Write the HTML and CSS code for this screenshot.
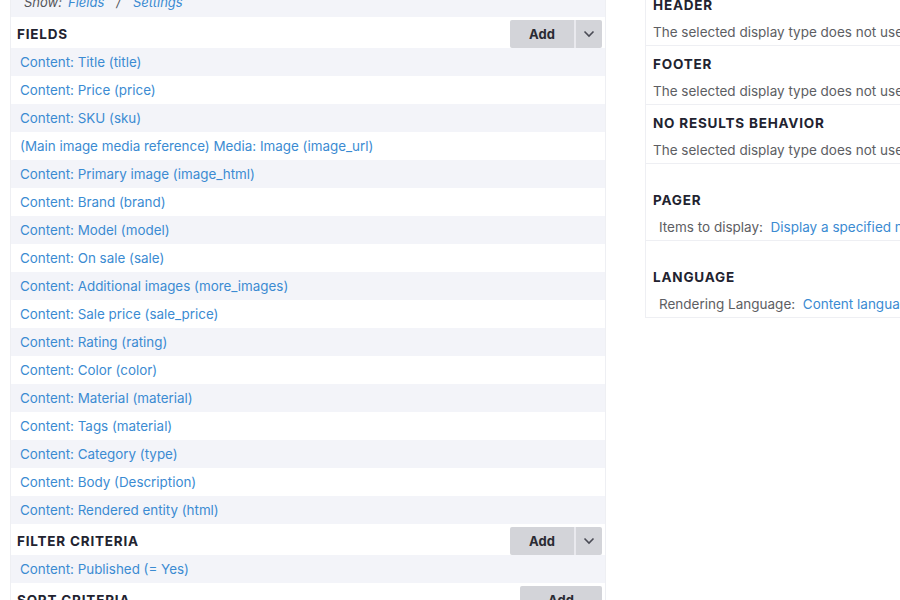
FILE: index.html
```html
<!DOCTYPE html>
<html>
<head>
<meta charset="utf-8">
<link rel="stylesheet" href="styles.css">
</head>
<body>
<div class="page">
  <div class="main">
    <div class="show-bar"><span class="show-label">Show:</span> <a href="#">Fields</a> <span class="sep">/</span> <a href="#">Settings</a></div>

    <section class="bucket">
      <div class="bucket-head">
        <h3>FIELDS</h3>
        <div class="btn-group"><button class="btn">Add</button><button class="btn caret"><svg width="12" height="8" viewBox="0 0 12 8"><path d="M1.5 1.5 L6 6 L10.5 1.5" fill="none" stroke="#4a4b55" stroke-width="1.6"/></svg></button></div>
      </div>
      <ul class="rows">
        <li><a href="#">Content: Title (title)</a></li>
        <li><a href="#">Content: Price (price)</a></li>
        <li><a href="#">Content: SKU (sku)</a></li>
        <li><a href="#">(Main image media reference) Media: Image (image_url)</a></li>
        <li><a href="#">Content: Primary image (image_html)</a></li>
        <li><a href="#">Content: Brand (brand)</a></li>
        <li><a href="#">Content: Model (model)</a></li>
        <li><a href="#">Content: On sale (sale)</a></li>
        <li><a href="#">Content: Additional images (more_images)</a></li>
        <li><a href="#">Content: Sale price (sale_price)</a></li>
        <li><a href="#">Content: Rating (rating)</a></li>
        <li><a href="#">Content: Color (color)</a></li>
        <li><a href="#">Content: Material (material)</a></li>
        <li><a href="#">Content: Tags (material)</a></li>
        <li><a href="#">Content: Category (type)</a></li>
        <li><a href="#">Content: Body (Description)</a></li>
        <li><a href="#">Content: Rendered entity (html)</a></li>
      </ul>
    </section>

    <section class="bucket">
      <div class="bucket-head">
        <h3>FILTER CRITERIA</h3>
        <div class="btn-group"><button class="btn">Add</button><button class="btn caret"><svg width="12" height="8" viewBox="0 0 12 8"><path d="M1.5 1.5 L6 6 L10.5 1.5" fill="none" stroke="#4a4b55" stroke-width="1.6"/></svg></button></div>
      </div>
      <ul class="rows">
        <li><a href="#">Content: Published (= Yes)</a></li>
      </ul>
    </section>

    <section class="bucket">
      <div class="bucket-head">
        <h3>SORT CRITERIA</h3>
        <div class="btn-group"><button class="btn wide">Add</button></div>
      </div>
    </section>
  </div>

  <div class="side">
    <section class="side-sec">
      <h3>HEADER</h3>
      <p class="desc">The selected display type does not use header plugins</p>
    </section>
    <section class="side-sec">
      <h3>FOOTER</h3>
      <p class="desc">The selected display type does not use footer plugins</p>
    </section>
    <section class="side-sec">
      <h3>NO RESULTS BEHAVIOR</h3>
      <p class="desc">The selected display type does not use area plugins</p>
    </section>
    <section class="side-sec spaced">
      <h3>PAGER</h3>
      <p class="desc setting">Items to display:&nbsp; <a href="#">Display a specified number of items</a></p>
    </section>
    <section class="side-sec spaced">
      <h3>LANGUAGE</h3>
      <p class="desc setting">Rendering Language:&nbsp; <a href="#">Content language of view row</a></p>
    </section>
  </div>
</div>
</body>
</html>
```

FILE: styles.css
```css
html, body {
  margin: 0;
  padding: 0;
  background: #ffffff;
  overflow: hidden;
}

body {
  font-family: Inter, "Noto Sans", sans-serif;
  font-size: 13.4px;
  color: #55565b;
}

a {
  color: #3b8bd2;
  text-decoration: none;
}

.page {
  display: flex;
  align-items: flex-start;
  gap: 39px;
  margin-top: -13px;
  padding-left: 10px;
  width: 1200px;
}

.main {
  width: 594px;
  flex: none;
  border-left: 1px solid #eeeff3;
  border-right: 1px solid #eeeff3;
}

.show-bar {
  height: 30px;
  display: flex;
  align-items: center;
  gap: 6px;
  padding-left: 13px;
  background: #f3f4f9;
  font-style: italic;
  font-size: 13px;
}

.show-bar .sep {
  margin: 0 6px;
}

.bucket-head {
  height: 31px;
  display: flex;
  align-items: flex-end;
  justify-content: space-between;
  padding: 0 3px 0 6px;
  background: #ffffff;
}

.bucket-head h3 {
  margin: 0;
  padding-top: 3px;
  align-self: center;
  font-size: 13.5px;
  font-weight: 700;
  letter-spacing: 0.8px;
  color: #222330;
}

.btn-group {
  display: flex;
}

.btn {
  height: 28px;
  width: 64px;
  border: 0;
  margin: 0;
  padding: 0;
  background: #d3d4d9;
  border-radius: 2px 0 0 2px;
  font-family: Inter, "Noto Sans", sans-serif;
  font-size: 13px;
  font-weight: 700;
  color: #2a2b33;
}

.btn.caret {
  width: 28px;
  border-left: 2px solid #e9e9ee;
  border-radius: 0 2px 2px 0;
  display: flex;
  align-items: center;
  justify-content: center;
}

.btn.wide {
  width: 82px;
  border-radius: 2px;
}

.rows {
  list-style: none;
  margin: 0;
  padding: 0;
}

.rows li {
  height: 28px;
  display: flex;
  align-items: center;
  padding-left: 9px;
  background: #f3f4f9;
}

.rows li:nth-child(even) {
  background: #ffffff;
}

.side {
  width: 400px;
  flex: none;
  border-left: 1px solid #eeeff3;
  border-bottom: 1px solid #eeeff3;
}

.side-sec {
  padding: 10px 0 3px 7px;
  border-bottom: 1px solid #eeeff3;
}

.side-sec:last-child {
  border-bottom: 0;
}

.side-sec.spaced {
  padding-top: 28px;
}

.side-sec h3 {
  margin: 0;
  height: 16px;
  line-height: 16px;
  font-size: 13.5px;
  font-weight: 700;
  letter-spacing: 0.8px;
  color: #222330;
}

.desc {
  margin: 9px 0 0 0;
  line-height: 20px;
  white-space: nowrap;
  font-size: 13.5px;
  letter-spacing: 0;
  color: #5d5e63;
}

.desc.setting {
  padding-left: 6px;
}
```
